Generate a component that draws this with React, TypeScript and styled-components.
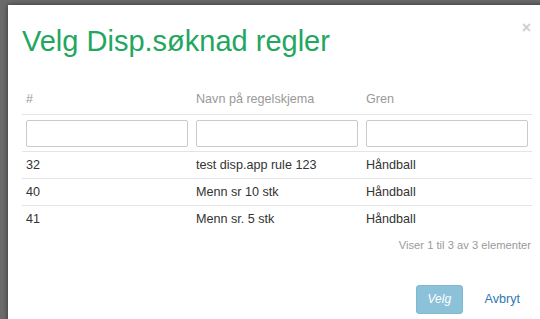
import React from 'react'
import styled, { createGlobalStyle } from 'styled-components'

type Rule = {
  id: number
  name: string
  branch: string
}

const rules: Rule[] = [
  { id: 32, name: 'test disp.app rule 123', branch: 'Håndball' },
  { id: 40, name: 'Menn sr 10 stk', branch: 'Håndball' },
  { id: 41, name: 'Menn sr. 5 stk', branch: 'Håndball' }
]

const columns = ['#', 'Navn på regelskjema', 'Gren']

const App = () => {
  return (
    <>
      <GlobalStyle />
      <StyledBackdrop>
        <StyledModal>
          <StyledHeader>
            <StyledTitle>Velg Disp.søknad regler</StyledTitle>
            <StyledClose type='button' aria-label='Lukk'>
              ×
            </StyledClose>
          </StyledHeader>

          <StyledBody>
            <StyledTable>
              <thead>
                <tr>
                  {columns.map((col) => (
                    <StyledHeadCell key={col}>{col}</StyledHeadCell>
                  ))}
                </tr>
                <tr>
                  {columns.map((col) => (
                    <StyledFilterCell key={col}>
                      <StyledFilterInput type='text' />
                    </StyledFilterCell>
                  ))}
                </tr>
              </thead>
              <tbody>
                {rules.map((rule, i) => (
                  <StyledRow key={rule.id} $last={i === rules.length - 1}>
                    <StyledCell>{rule.id}</StyledCell>
                    <StyledCell>{rule.name}</StyledCell>
                    <StyledCell>{rule.branch}</StyledCell>
                  </StyledRow>
                ))}
              </tbody>
            </StyledTable>
            <StyledInfo>Viser 1 til 3 av 3 elementer</StyledInfo>
          </StyledBody>

          <StyledFooter>
            <StyledPrimaryButton type='button' disabled>
              Velg
            </StyledPrimaryButton>
            <StyledLinkButton type='button'>Avbryt</StyledLinkButton>
          </StyledFooter>
        </StyledModal>
      </StyledBackdrop>
    </>
  )
}

export default App

const GlobalStyle = createGlobalStyle`
  html, body {
    margin: 0;
    padding: 0;
    width: 540px;
    height: 319px;
    overflow: hidden;
    background: #6b6b6b;
  }

  body {
    font-family: 'Liberation Sans', Arial, sans-serif;
    color: #333;
  }
`

const StyledBackdrop = styled.div`
  width: 540px;
  height: 319px;
  background: #6b6b6b;
  padding: 5px 0 0 8px;
  box-sizing: border-box;
  overflow: hidden;
`

const StyledModal = styled.div`
  width: 540px;
  min-height: 340px;
  background: #fff;
  box-shadow: 0 0 5px rgba(0, 0, 0, 0.55);
  display: flex;
  flex-direction: column;
`

const StyledHeader = styled.div`
  display: flex;
  justify-content: space-between;
  align-items: flex-start;
  padding: 19px 17px 0 14px;
`

const StyledTitle = styled.h1`
  margin: 0;
  font-size: 29px;
  font-weight: normal;
  line-height: 34px;
  color: #23a660;
`

const StyledClose = styled.button`
  border: 0;
  background: none;
  padding: 0;
  margin-top: -6px;
  font-family: 'Liberation Sans', Arial, sans-serif;
  font-size: 16px;
  font-weight: bold;
  line-height: 20px;
  color: #cfcfcf;
  cursor: pointer;
`

const StyledBody = styled.div`
  padding: 22px 14px 0 14px;
`

const StyledTable = styled.table`
  width: 510px;
  border-collapse: collapse;
  table-layout: fixed;
  font-size: 12.6px;
  line-height: 18px;
`

const StyledHeadCell = styled.th`
  text-align: left;
  font-weight: normal;
  color: #999;
  padding: 10px 4px 6px;
  border-bottom: 1px solid #e4e4e4;
`

const StyledFilterCell = styled.th`
  padding: 5px 4px 4px;
  border-bottom: 1px solid #e4e4e4;
`

const StyledFilterInput = styled.input`
  display: block;
  width: 100%;
  height: 27px;
  box-sizing: border-box;
  border: 1px solid #cacaca;
  border-radius: 2px;
  padding: 2px 6px;
  font-family: 'Liberation Sans', Arial, sans-serif;
  font-size: 12.6px;
`

const StyledRow = styled.tr<{ $last: boolean }>`
  border-bottom: ${({ $last }) => ($last ? 'none' : '1px solid #e4e4e4')};
`

const StyledCell = styled.td`
  padding: 4px 4px 4px;
  color: #333;
`

const StyledInfo = styled.div`
  width: 510px;
  box-sizing: border-box;
  text-align: right;
  font-size: 11.2px;
  line-height: 16px;
  color: #9a9a9a;
  padding: 5px 1px 0 0;
`

const StyledFooter = styled.div`
  display: flex;
  justify-content: flex-end;
  align-items: center;
  gap: 9px;
  padding: 32px 15px 0 0;
`

const StyledPrimaryButton = styled.button`
  font-family: 'Liberation Sans', Arial, sans-serif;
  font-size: 12px;
  font-style: italic;
  line-height: 17px;
  color: #fff;
  background: #8cc1da;
  border: 1px solid #80b8d2;
  border-radius: 3px;
  padding: 5px 11px;
  width: 47px;

  &:disabled {
    cursor: not-allowed;
  }
`

const StyledLinkButton = styled.button`
  font-family: 'Liberation Sans', Arial, sans-serif;
  font-size: 12.6px;
  line-height: 17px;
  color: #2f77b5;
  background: none;
  border: 1px solid transparent;
  padding: 5px 12px;
  cursor: pointer;
`
